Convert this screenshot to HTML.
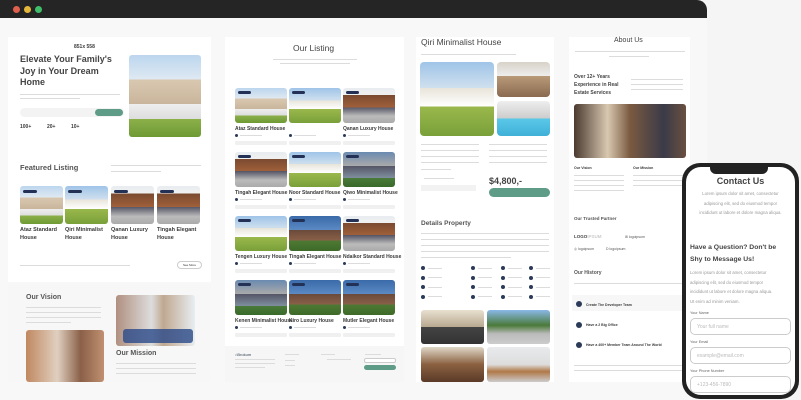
<!DOCTYPE html>
<html><head><meta charset="utf-8"><style>
*{margin:0;padding:0;box-sizing:border-box}
body{width:801px;height:400px;overflow:hidden;background:#f5f5f5;font-family:"Liberation Sans",sans-serif;color:#333;position:relative}
.a{position:absolute}
.p{position:absolute;background:#fff}
.t{position:absolute;white-space:nowrap;color:#3a3a3a}
.l{position:absolute;height:1.5px;background:#dcdcdc}
.img{position:absolute;border-radius:3px;overflow:hidden}
.house{background:linear-gradient(#bcd6ee 0,#dfe9f2 30%,#d9c8b0 30%,#c9b59c 60%,#eee 60%,#ddd 78%,#8cb04a 78%,#6e9a34 100%)}
.h2{background:linear-gradient(#9fc4e8 0,#cfe0ee 35%,#e8e4da 35%,#fff 60%,#9ab84c 60%,#79a03a 100%)}
.h3{background:linear-gradient(#e8ecf0 0,#f0f0f0 20%,#7a4a30 20%,#a0603a 55%,#556 55%,#bbb 80%,#aaa 100%)}
.h4{background:linear-gradient(#3a6aa8 0,#5b8ac4 40%,#6b4a3a 40%,#8a6048 70%,#4e7a34 70%,#3e6a2a 100%)}
.h5{background:linear-gradient(#6a8ab0 0,#aaa 40%,#556 40%,#8090a0 75%,#4a7a3a 75%,#3a6a2a 100%)}
.room{background:linear-gradient(#d8d2c8 0,#eee 40%,#b89a78 40%,#8a6a50 100%)}
.pill{position:absolute;width:10px;height:3px;border-radius:2px;background:#233156;top:3px;left:3px}
.feat{position:absolute;height:4px;background:#f0f0f0;border-radius:1px}
.dot{position:absolute;width:4px;height:4px;border-radius:50%;background:#2c3a5a}
.inp{position:absolute;border:1px solid #ccc;border-radius:5px;height:17px;left:8px;width:101px;font-size:5px;color:#bbb;padding:5px 0 0 6px}
</style></head><body>
<div class="a" style="left:0;top:0;width:707px;height:18px;background:#252525;border-radius:0 10px 0 0"></div>
<div class="a" style="left:13px;top:6px;width:7px;height:7px;border-radius:50%;background:#e0604e"></div>
<div class="a" style="left:24px;top:6px;width:7px;height:7px;border-radius:50%;background:#e5b83c"></div>
<div class="a" style="left:35px;top:6px;width:7px;height:7px;border-radius:50%;background:#3fbf6a"></div>
<div class="a" style="left:0;top:18px;width:707px;height:382px;background:#f8f8f8"></div>

<div class="p" style="left:8px;top:37px;width:203px;height:245px">
 <div class="t" style="left:66px;top:7px;font-size:5px;font-weight:bold">851x 558</div>
 <div class="t" style="left:12px;top:17px;font-size:9px;font-weight:bold;line-height:11.5px;color:#444">Elevate Your Family's<br>Joy in Your Dream<br>Home</div>
 <div class="l" style="left:12px;top:57px;width:100px;height:1px"></div>
 <div class="l" style="left:12px;top:61px;width:60px;height:1px"></div>
 <div class="a" style="left:12px;top:71px;width:104px;height:9px;border-radius:5px;background:#f3f3f3"></div>
 <div class="a" style="left:87px;top:72px;width:28px;height:7px;border-radius:4px;background:#5e9c88"></div>
 <div class="t" style="left:12px;top:87px;font-size:5px;font-weight:bold">100+</div>
 <div class="t" style="left:39px;top:87px;font-size:5px;font-weight:bold">20+</div>
 <div class="t" style="left:63px;top:87px;font-size:5px;font-weight:bold">10+</div>
 <div class="img house" style="left:121px;top:18px;width:72px;height:82px"></div>
 <div class="t" style="left:12px;top:126px;font-size:7.5px;font-weight:bold;color:#555">Featured Listing</div>
 <div class="l" style="left:103px;top:128px;width:90px;height:1px"></div>
 <div class="l" style="left:103px;top:134px;width:50px;height:1px"></div>
 <div class="img house" style="left:12px;top:149px;width:43px;height:38px"><div class="pill" style="width:14px;top:4px"></div></div>
 <div class="img h2" style="left:57px;top:149px;width:43px;height:38px"><div class="pill" style="width:14px;top:4px"></div></div>
 <div class="img h3" style="left:103px;top:149px;width:43px;height:38px"><div class="pill" style="width:14px;top:4px"></div></div>
 <div class="img h3" style="left:149px;top:149px;width:43px;height:38px"><div class="pill" style="width:14px;top:4px"></div></div>
 <div class="t" style="left:12px;top:190px;font-size:5.5px;font-weight:bold;line-height:7.5px">Ataz Standard<br>House</div>
 <div class="t" style="left:57px;top:190px;font-size:5.5px;font-weight:bold;line-height:7.5px">Qiri Minimalist<br>House</div>
 <div class="t" style="left:103px;top:190px;font-size:5.5px;font-weight:bold;line-height:7.5px">Qanan Luxury<br>House</div>
 <div class="t" style="left:149px;top:190px;font-size:5.5px;font-weight:bold;line-height:7.5px">Tingah Elegant<br>House</div>
 <div class="l" style="left:12px;top:228px;width:110px;height:1px"></div>
 <div class="a" style="left:169px;top:224px;width:25px;height:8px;border:1px solid #ccc;border-radius:4px;font-size:3px;text-align:center;line-height:6px">See More</div>
</div>

<div class="a" style="left:8px;top:284px;width:203px;height:98px;background:#f7f7f7">
 <div class="t" style="left:18px;top:10px;font-size:7px;font-weight:bold;color:#555">Our Vision</div>
 <div class="l" style="left:18px;top:23px;width:75px;height:1px"></div>
 <div class="l" style="left:18px;top:28px;width:75px;height:1px"></div>
 <div class="l" style="left:18px;top:33px;width:75px;height:1px"></div>
 <div class="l" style="left:18px;top:38px;width:45px;height:1px"></div>
 <div class="img" style="left:18px;top:46px;width:78px;height:52px;background:linear-gradient(90deg,#c08860,#e0d0c0 40%,#8a6048 70%,#c09070)"></div>
 <div class="img" style="left:108px;top:11px;width:79px;height:51px;background:linear-gradient(90deg,#b09080,#ddd 45%,#c0a890 60%,#e8eef2);"></div>
 <div class="a" style="left:115px;top:45px;width:70px;height:14px;background:#2a4a8a;border-radius:3px;opacity:.8"></div>
 <div class="t" style="left:108px;top:66px;font-size:7px;font-weight:bold;color:#555">Our Mission</div>
 <div class="l" style="left:108px;top:79px;width:80px;height:1px"></div>
 <div class="l" style="left:108px;top:84px;width:80px;height:1px"></div>
 <div class="l" style="left:108px;top:89px;width:80px;height:1px"></div>
</div>

<div class="p" style="left:225px;top:37px;width:179px;height:309px">
 <div class="t" style="left:68px;top:6px;font-size:8.5px;color:#444">Our Listing</div>
 <div class="l" style="left:48px;top:22px;width:84px;height:1px"></div>
 <div class="l" style="left:55px;top:26px;width:70px;height:1px"></div>
</div>
<div class="a" style="left:225px;top:346px;width:179px;height:36px;background:#f6f6f6">
 <div class="t" style="left:10px;top:6px;font-size:4px;color:#345">⌂Brokum</div>
 <div class="l" style="left:10px;top:13px;width:40px;height:1px"></div>
 <div class="l" style="left:10px;top:17px;width:40px;height:1px"></div>
 <div class="l" style="left:10px;top:21px;width:30px;height:1px"></div>
 <div class="l" style="left:60px;top:8px;width:14px;height:1px"></div>
 <div class="l" style="left:60px;top:14px;width:10px;height:1px"></div>
 <div class="l" style="left:60px;top:19px;width:10px;height:1px"></div>
 <div class="l" style="left:96px;top:8px;width:14px;height:1px"></div>
 <div class="l" style="left:102px;top:13px;width:24px;height:1px"></div>
 <div class="l" style="left:140px;top:8px;width:16px;height:1px"></div>
 <div class="a" style="left:139px;top:12px;width:32px;height:5px;border:1px solid #ccc;border-radius:2px;background:#fff"></div>
 <div class="a" style="left:139px;top:19px;width:32px;height:5px;border-radius:3px;background:#5e9c88"></div>
</div>
<div id="grid"></div>

<div class="p" style="left:416px;top:37px;width:138px;height:345px">
 <div class="t" style="left:5px;top:0px;font-size:8.5px;color:#444">Qiri Minimalist House</div>
 <div class="l" style="left:5px;top:17px;width:95px;height:1px"></div>
 <div class="img h2" style="left:4px;top:25px;width:74px;height:74px;border-radius:4px"></div>
 <div class="img room" style="left:81px;top:25px;width:53px;height:35px;border-radius:4px"></div>
 <div class="img" style="left:81px;top:64px;width:53px;height:35px;border-radius:4px;background:linear-gradient(#eee 0,#ccc 50%,#5ac8e8 50%,#40b0d8)"></div>
 <div class="l" style="left:5px;top:107px;width:58px;height:1px"></div>
 <div class="l" style="left:5px;top:113px;width:58px;height:1px"></div>
 <div class="l" style="left:5px;top:119px;width:58px;height:1px"></div>
 <div class="l" style="left:5px;top:125px;width:58px;height:1px"></div>
 <div class="l" style="left:5px;top:132px;width:30px;height:1px"></div>
 <div class="l" style="left:73px;top:107px;width:58px;height:1px"></div>
 <div class="l" style="left:73px;top:113px;width:58px;height:1px"></div>
 <div class="l" style="left:73px;top:119px;width:58px;height:1px"></div>
 <div class="l" style="left:73px;top:125px;width:58px;height:1px"></div>
 <div class="l" style="left:8px;top:141px;width:30px;height:1px"></div>
 <div class="a" style="left:5px;top:148px;width:55px;height:6px;background:#f2f2f2"></div>
 <div class="t" style="left:73px;top:139px;font-size:9px;font-weight:bold;color:#444">$4,800,-</div>
 <div class="a" style="left:73px;top:151px;width:61px;height:9px;border-radius:5px;background:#5e9c88"></div>
 <div class="t" style="left:5px;top:183px;font-size:6.5px;font-weight:bold;color:#555">Details Property</div>
 <div class="l" style="left:5px;top:196px;width:128px;height:1px"></div>
 <div class="l" style="left:5px;top:202px;width:128px;height:1px"></div>
 <div class="l" style="left:5px;top:208px;width:128px;height:1px"></div>
 <div class="l" style="left:5px;top:214px;width:128px;height:1px"></div>
 <div class="l" style="left:5px;top:220px;width:90px;height:1px"></div>
 <div id="chk"></div>
 <div class="img" style="left:5px;top:273px;width:63px;height:34px;background:linear-gradient(#e8e0d0 0,#b8a890 50%,#444 50%,#333)"></div>
 <div class="img" style="left:71px;top:273px;width:63px;height:34px;background:linear-gradient(#8ab8e8 0,#4a7a3a 45%,#bbb 70%,#ccc)"></div>
 <div class="img" style="left:5px;top:310px;width:63px;height:35px;background:linear-gradient(#e0d8c8,#8a6040 50%,#5a3a28)"></div>
 <div class="img" style="left:71px;top:310px;width:63px;height:35px;background:linear-gradient(#e8eaec,#ddd 50%,#b07848 70%,#ccc)"></div>
</div>

<div class="p" style="left:569px;top:37px;width:121px;height:345px">
 <div class="t" style="left:45px;top:0px;font-size:7px;color:#444">About Us</div>
 <div class="l" style="left:6px;top:14px;width:110px;height:1px"></div>
 <div class="l" style="left:40px;top:19px;width:40px;height:1px"></div>
 <div class="t" style="left:5px;top:36px;font-size:5px;font-weight:bold;line-height:8.2px;color:#444">Over 12+ Years<br>Experience in Real<br>Estate Services</div>
 <div class="l" style="left:62px;top:42px;width:52px;height:1px"></div>
 <div class="l" style="left:62px;top:47px;width:52px;height:1px"></div>
 <div class="l" style="left:62px;top:52px;width:52px;height:1px"></div>
 <div class="img" style="left:5px;top:67px;width:112px;height:54px;background:linear-gradient(90deg,#4a3a30,#d8c8b0 30%,#7a5a40 50%,#3a3a48 80%,#6a5040)"></div>
 <div class="t" style="left:5px;top:129px;font-size:3.5px;font-weight:bold">Our Vision</div>
 <div class="t" style="left:64px;top:129px;font-size:3.5px;font-weight:bold">Our Mission</div>
 <div class="l" style="left:5px;top:138px;width:50px;height:1px"></div><div class="l" style="left:64px;top:138px;width:50px;height:1px"></div>
 <div class="l" style="left:5px;top:143px;width:50px;height:1px"></div><div class="l" style="left:64px;top:143px;width:50px;height:1px"></div>
 <div class="l" style="left:5px;top:148px;width:50px;height:1px"></div><div class="l" style="left:64px;top:148px;width:50px;height:1px"></div>
 <div class="l" style="left:5px;top:153px;width:50px;height:1px"></div>
 <div class="t" style="left:5px;top:179px;font-size:4.5px;font-weight:bold;color:#555">Our Trusted Partner</div>
 <div class="t" style="left:5px;top:197px;font-size:4.5px;font-weight:bold;color:#444">LOGO<span style="color:#ccc">IPSUM</span></div>
 <div class="t" style="left:56px;top:198px;font-size:3.5px;color:#555">⊞ logoipsum</div>
 <div class="t" style="left:5px;top:210px;font-size:3.5px;color:#555">◎ logoipsum</div>
 <div class="t" style="left:37px;top:210px;font-size:3.5px;color:#555">D logoipsum</div>
 <div class="t" style="left:5px;top:233px;font-size:5px;font-weight:bold;color:#555">Our History</div>
 <div class="l" style="left:5px;top:246px;width:110px;height:1px"></div>
 <div class="a" style="left:3px;top:258px;width:118px;height:16px;background:#f7f7f7"></div>
 <div class="dot" style="left:7px;top:264px;width:6px;height:6px"></div>
 <div class="t" style="left:17px;top:266px;font-size:3.5px;font-weight:bold">Create The Developer Team</div>
 <div class="dot" style="left:7px;top:285px;width:6px;height:6px"></div>
 <div class="t" style="left:17px;top:286px;font-size:3.5px;font-weight:bold">Have a 2 Big Office</div>
 <div class="dot" style="left:7px;top:305px;width:6px;height:6px"></div>
 <div class="t" style="left:17px;top:306px;font-size:3.5px;font-weight:bold">Have a 400+ Member Team Around The World</div>
 <div class="l" style="left:5px;top:328px;width:110px;height:1px"></div>
 <div class="l" style="left:5px;top:333px;width:110px;height:1px"></div>
</div>

<div class="a" style="left:682px;top:163px;width:117px;height:236px;background:#222;border-radius:18px"></div>
<div class="a" style="left:686px;top:167px;width:109px;height:228px;background:#fff;border-radius:15px;overflow:hidden">
 <div class="a" style="left:24px;top:-4px;width:58px;height:11px;background:#222;border-radius:0 0 6px 6px"></div>
 <div class="t" style="left:0;width:109px;text-align:center;top:9px;font-size:9px;font-weight:bold;color:#444">Contact Us</div>
 <div class="a" style="left:0;width:109px;text-align:center;top:22px;font-size:4.3px;line-height:9.5px;color:#999">Lorem ipsum dolor sit amet, consectetur<br>adipiscing elit, sed do eiusmod tempor<br>incididunt ut labore et dolore magna aliqua.</div>
 <div class="t" style="left:4px;top:75px;font-size:6.8px;font-weight:bold;line-height:12px;color:#444">Have a Question? Don't be<br>Shy to Message Us!</div>
 <div class="a" style="left:4px;top:101px;font-size:4.3px;line-height:9.6px;color:#999;white-space:nowrap">Lorem ipsum dolor sit amet, consectetur<br>adipiscing elit, sed do eiusmod tempor<br>incididunt ut labore et dolore magna aliqua.<br>Ut enim ad minim veniam.</div>
 <div class="t" style="left:4px;top:144px;font-size:3.8px;color:#666">Your Name</div>
 <div class="inp" style="left:4px;top:151px">Your full name</div>
 <div class="t" style="left:4px;top:173px;font-size:3.8px;color:#666">Your Email</div>
 <div class="inp" style="left:4px;top:180px">example@email.com</div>
 <div class="t" style="left:4px;top:202px;font-size:3.8px;color:#666">Your Phone Number</div>
 <div class="inp" style="left:4px;top:209px">+123-456-7890</div>
</div>

<script>
var g=document.getElementById('grid'),h='';
var names=[["Ataz Standard House","","Qanan Luxury House"],["Tingah Elegant House","Noor Standard House","Qiwo Minimalist House"],["Tengen Luxury House","Tingah Elegant House","Ndaikor Standard House"],["Kenen Minimalist House","Kiro Luxury House","Mutler Elegant House"]];
var cls=[["house","h2","h3"],["h3","h2","h5"],["h2","h4","h3"],["h5","h4","h4"]];
var xs=[235,289,343];
for(var r=0;r<4;r++){var y=88+r*64;for(var c=0;c<3;c++){
h+='<div class="img '+cls[r][c]+'" style="left:'+xs[c]+'px;top:'+y+'px;width:52px;height:35px"><div class="pill" style="width:13px;top:3px"></div></div>';
if(names[r][c])h+='<div class="t" style="left:'+xs[c]+'px;top:'+(y+38)+'px;font-size:5px;font-weight:bold">'+names[r][c]+'</div>';
h+='<div class="dot" style="left:'+xs[c]+'px;top:'+(y+46)+'px;width:3px;height:3px"></div><div class="l" style="left:'+(xs[c]+5)+'px;top:'+(y+47)+'px;width:22px;height:1px"></div>';
h+='<div class="feat" style="left:'+xs[c]+'px;top:'+(y+53)+'px;width:52px"></div>';}}
g.innerHTML=h;
var k=document.getElementById('chk'),s='',cx=[5,55,85,113];
for(var i=0;i<4;i++)for(var j=0;j<4;j++){s+='<div class="dot" style="left:'+cx[j]+'px;top:'+(229+i*9.5)+'px"></div><div class="l" style="left:'+(cx[j]+7)+'px;top:'+(230.5+i*9.5)+'px;width:14px;height:1px"></div>';}
k.innerHTML=s;
</script>
</body></html>
